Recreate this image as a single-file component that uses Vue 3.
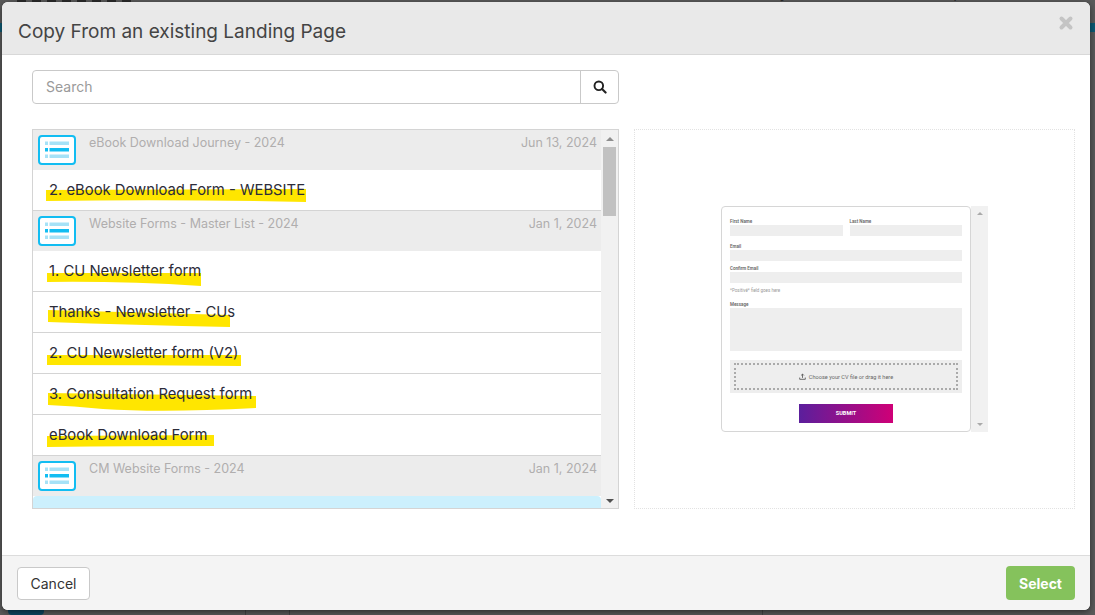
<script setup>
// marker paths are in row coordinates, traced from the highlighter swipes
const groups = [
  {
    name: 'eBook Download Journey - 2024',
    date: 'Jun 13, 2024',
    forms: [
      { name: '2. eBook Download Form - WEBSITE', mark: 'M13 20 L273 19 L273 32 Q140 29 13 31 Z' }
    ]
  },
  {
    name: 'Website Forms - Master List - 2024',
    date: 'Jan 1, 2024',
    forms: [
      { name: '1. CU Newsletter form', mark: 'M14 22 L168 22 L168 35 Q90 30 14 31 Z' },
      { name: 'Thanks - Newsletter - CUs', mark: 'M15 18 L197 23 L197 35 Q100 33 15 30 Z' },
      { name: '2. CU Newsletter form (V2)', mark: 'M14 22 L208 22 L208 33 Q110 32 14 32 Z' },
      { name: '3. Consultation Request form', mark: 'M15 19 L223 22 L223 34 Q130 39 70 35 Q40 32 15 31 Z' },
      { name: 'eBook Download Form', mark: 'M14 21 L181 20 L181 31 Q100 31 14 32 Z' }
    ]
  },
  {
    name: 'CM Website Forms - 2024',
    date: 'Jan 1, 2024',
    forms: []
  }
]

const navItems = ['Home', 'Journeys', 'Contacts', 'Reports', 'Account']
</script>

<template>
  <div class="page">
    <!-- dimmed app behind the dialog -->
    <div class="backdrop">
      <div class="logo-strip"></div>
      <div class="nav-strip">
        <span v-for="item in navItems" :key="item">{{ item }}</span>
      </div>
      <div class="teal-bar"></div>
      <div class="foot-tab"></div>
      <div class="foot-line line-a"></div>
      <div class="foot-line line-b"></div>
      <div class="foot-line line-c"></div>
    </div>

    <div class="modal">
      <header class="modal-header">
        <h1>Copy From an existing Landing Page</h1>
        <svg class="close" viewBox="0 0 16 16" width="16" height="16">
          <path d="M3.5 3.5l9 9M12.5 3.5l-9 9" stroke="#c4c4c4" stroke-width="4" stroke-linecap="round" />
        </svg>
      </header>

      <main class="modal-body">
        <div class="left-col">
          <div class="search">
            <div class="search-input">Search</div>
            <button class="search-btn">
              <svg viewBox="0 0 14 14" width="14" height="14">
                <circle cx="5.8" cy="5.8" r="4.3" fill="none" stroke="#222" stroke-width="1.9" />
                <path d="M9 9l3.6 3.6" stroke="#222" stroke-width="2.1" stroke-linecap="round" />
              </svg>
            </button>
          </div>

          <div class="list-box">
            <div class="list">
              <template v-for="group in groups" :key="group.name">
                <div class="group-row">
                  <svg class="group-icon" viewBox="0 0 38 30" width="38" height="30">
                    <rect x="1" y="1" width="36" height="28" rx="3" fill="#fff" stroke="#12bdf2" stroke-width="2" />
                    <rect x="7" y="6.5" width="3" height="3.5" fill="#a6e2f7" />
                    <rect x="11.5" y="6.5" width="19.5" height="3.5" fill="#a6e2f7" />
                    <rect x="7" y="13" width="3" height="3.5" fill="#12bdf2" />
                    <rect x="11.5" y="13" width="19.5" height="3.5" fill="#12bdf2" />
                    <rect x="7" y="19.5" width="3" height="3.5" fill="#a6e2f7" />
                    <rect x="11.5" y="19.5" width="19.5" height="3.5" fill="#a6e2f7" />
                  </svg>
                  <span class="group-name">{{ group.name }}</span>
                  <span class="group-date">{{ group.date }}</span>
                </div>
                <div v-for="form in group.forms" :key="form.name" class="form-row">
                  <svg class="marker" width="300" height="40" viewBox="0 0 300 40">
                    <path :d="form.mark" fill="#ffe600" />
                  </svg>
                  <span class="form-name">{{ form.name }}</span>
                </div>
              </template>
              <div class="selected-row"></div>
            </div>
            <div class="scrollbar">
              <span class="arrow up"></span>
              <div class="track"><div class="thumb"></div></div>
              <span class="arrow down"></span>
            </div>
          </div>
        </div>

        <div class="preview">
          <div class="preview-frame">
            <div class="mini-form">
              <div class="mini-two">
                <div class="mini-field"><label>First Name</label><i></i></div>
                <div class="mini-field"><label>Last Name</label><i></i></div>
              </div>
              <div class="mini-field"><label>Email</label><i></i></div>
              <div class="mini-field"><label>Confirm Email</label><i></i></div>
              <p class="mini-note">*Positivé* field goes here</p>
              <div class="mini-field"><label>Message</label><i class="area"></i></div>
              <div class="mini-upload">
                <div class="mini-drop">
                  <svg viewBox="0 0 10 10" width="7" height="7">
                    <path d="M5 7V1.5M3 3.5l2-2 2 2M1 6.5V9h8V6.5" fill="none" stroke="#555" stroke-width="1.2" />
                  </svg>
                  Choose your CV file or drag it here
                </div>
              </div>
              <div class="mini-submit">SUBMIT</div>
            </div>
            <div class="mini-scroll">
              <span class="mini-up"></span>
              <span class="mini-down"></span>
            </div>
          </div>
        </div>
      </main>

      <footer class="modal-footer">
        <button class="btn-cancel">Cancel</button>
        <button class="btn-select">Select</button>
      </footer>
    </div>
  </div>
</template>

<style>
html, body {
  margin: 0;
  overflow: hidden;
}
</style>

<style scoped>
.page {
  position: relative;
  width: 1095px;
  height: 615px;
  background: #5a5a5a;
  overflow: hidden;
  font-family: Inter, "Liberation Sans", sans-serif;
  box-sizing: border-box;
  padding: 2px 5px 5px 2px;
}

.backdrop {
  position: absolute;
  inset: 0;
}

.logo-strip {
  position: absolute;
  top: 0;
  left: 17px;
  width: 120px;
  height: 2px;
  background: repeating-linear-gradient(90deg, #2a2a2a 0 9px, transparent 9px 15px);
}

.nav-strip {
  position: absolute;
  top: -16px;
  left: 648px;
  display: grid;
  grid-template-columns: 82px 105px 100px 108px auto;
  color: #2b2b2b;
  font-size: 15px;
  line-height: 18px;
}

.teal-bar {
  position: absolute;
  top: 23px;
  left: 0;
  right: 0;
  height: 9px;
  background: #0d5a75;
}

.foot-tab {
  position: absolute;
  left: 8px;
  bottom: 0;
  width: 36px;
  height: 5px;
  background: #0d4560;
  border-radius: 0 0 4px 4px;
}

.foot-line {
  position: absolute;
  bottom: 0;
  width: 1px;
  height: 5px;
  background: #444;
}

.line-a { left: 245px; }
.line-b { left: 289px; }
.line-c { left: 762px; }

.modal {
  position: relative;
  width: 1088px;
  height: 608px;
  background: #fff;
  border-radius: 6px;
  display: flex;
  flex-direction: column;
  overflow: hidden;
  box-shadow: 0 2px 6px rgba(0, 0, 0, 0.5);
}

.modal-header {
  height: 52px;
  flex: none;
  background: #e9e9e9;
  border-bottom: 1px solid #d8d8d8;
  display: flex;
  align-items: center;
  justify-content: space-between;
  padding: 0 16px 0 16px;
  box-sizing: content-box;
}

.modal-header h1 {
  margin: 6px 0 0;
  font-size: 19px;
  font-weight: 400;
  color: #444;
}

.close {
  margin-top: -10px;
}

.modal-body {
  flex: 1;
  display: flex;
  gap: 15px;
  padding: 15px 15px 0 30px;
  min-height: 0;
}

.left-col {
  width: 587px;
  flex: none;
}

.search {
  display: flex;
  height: 34px;
  border: 1px solid #c9c9c9;
  border-radius: 4px;
  box-sizing: border-box;
}

.search-input {
  flex: 1;
  padding-left: 13px;
  line-height: 32px;
  font-size: 14px;
  color: #9a9a9a;
  border-right: 1px solid #c9c9c9;
}

.search-btn {
  width: 37px;
  border: 0;
  padding: 0;
  background: transparent;
  display: flex;
  align-items: center;
  justify-content: center;
}

.list-box {
  margin-top: 25px;
  height: 380px;
  border: 1px solid #d4d4d4;
  box-sizing: border-box;
  display: flex;
  overflow: hidden;
}

.list {
  width: 568px;
  flex: none;
  overflow: hidden;
}

.group-row {
  height: 40px;
  background: #ececec;
  display: flex;
  align-items: flex-start;
  padding: 5px 4px 0 5px;
  box-sizing: border-box;
}

.group-icon {
  flex: none;
}

.group-name {
  margin-left: 13px;
  font-size: 12.5px;
  line-height: 16px;
  color: #b0aeae;
  flex: 1;
}

.group-date {
  font-size: 12.5px;
  line-height: 16px;
  color: #b0aeae;
}

.form-row {
  position: relative;
  height: 41px;
  background: #fff;
  border-bottom: 1px solid #d4d4d4;
  box-sizing: border-box;
  padding-left: 16px;
  line-height: 40px;
  font-size: 14.8px;
  color: #2c2c3a;
}

.form-name {
  position: relative;
}

/* yellow highlighter swipe behind the name */
.marker {
  position: absolute;
  left: 0;
  top: 0;
}

.selected-row {
  height: 20px;
  background: #ccf0fd;
  border-radius: 4px 4px 0 0;
}

.scrollbar {
  flex: 1;
  background: #f1f1f1;
  display: flex;
  flex-direction: column;
  align-items: center;
  padding: 7px 0 5px;
  box-sizing: border-box;
}

.track {
  flex: 1;
  width: 100%;
  padding: 6px 2px 0;
  box-sizing: border-box;
}

.thumb {
  height: 69px;
  background: #c1c1c1;
}

.arrow {
  width: 0;
  height: 0;
  border-left: 4px solid transparent;
  border-right: 4px solid transparent;
}

.arrow.up {
  border-bottom: 4px solid #8e8e8e;
}

.arrow.down {
  border-top: 4px solid #505050;
}

.preview {
  flex: 1;
  margin-top: 59px;
  height: 380px;
  border: 1px dotted #e2e2e2;
  box-sizing: border-box;
  display: flex;
  align-items: center;
  justify-content: center;
}

.preview-frame {
  display: flex;
  width: 267px;
  height: 226px;
}

.mini-form {
  width: 250px;
  height: 226px;
  border: 1px solid #d6d6d6;
  border-radius: 4px;
  box-sizing: border-box;
  padding: 11px 8px 0;
  color: #666;
  font-family: Roboto, "Liberation Sans", sans-serif;
  font-size: 4.5px;
}

.mini-two {
  display: flex;
  gap: 7px;
  margin-bottom: 3px;
}

.mini-two .mini-field {
  flex: 1;
}

.mini-field {
  margin-bottom: 4px;
}

.mini-field label {
  display: block;
  line-height: 7px;
  font-weight: 600;
}

.mini-field i {
  display: block;
  height: 11px;
  background: #eeeeee;
}

.mini-field i.area {
  height: 43px;
}

.mini-note {
  margin: 0 0 7px;
  line-height: 7px;
  color: #999;
}

.mini-upload {
  height: 33px;
  background: #eeeeee;
  padding: 3px 4px;
  box-sizing: border-box;
  margin-top: 9px;
}

.mini-drop {
  height: 100%;
  border: 2px dotted #aaa;
  box-sizing: border-box;
  display: flex;
  align-items: center;
  justify-content: center;
  gap: 3px;
  font-size: 5.6px;
  color: #666;
}

.mini-submit {
  width: 94px;
  height: 19px;
  margin: 11px auto 0;
  background: linear-gradient(90deg, #5b1f9c, #cf0077);
  color: #fff;
  font-size: 5.5px;
  font-weight: 700;
  text-align: center;
  line-height: 19px;
}

.mini-scroll {
  flex: 1;
  background: #f1f1f1;
  display: flex;
  flex-direction: column;
  align-items: center;
  justify-content: space-between;
  padding: 6px 0 6px;
}

.mini-up, .mini-down {
  width: 0;
  height: 0;
  border-left: 3px solid transparent;
  border-right: 3px solid transparent;
}

.mini-up {
  border-bottom: 3px solid #aaa;
}

.mini-down {
  border-top: 3px solid #aaa;
}

.modal-footer {
  height: 55px;
  flex: none;
  background: #f4f4f4;
  border-top: 1px solid #dcdcdc;
  display: flex;
  align-items: center;
  justify-content: space-between;
  padding: 0 15px;
  box-sizing: border-box;
}

.btn-cancel {
  width: 73px;
  height: 33px;
  background: #fff;
  border: 1px solid #c9c9c9;
  border-radius: 4px;
  font-family: inherit;
  font-size: 14px;
  color: #333;
}

.btn-select {
  width: 69px;
  height: 34px;
  background: #85c25c;
  border: 0;
  border-radius: 4px;
  font-family: inherit;
  font-size: 14px;
  font-weight: 700;
  color: #fff;
}
</style>
